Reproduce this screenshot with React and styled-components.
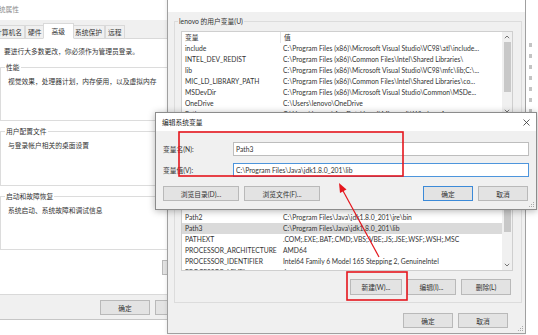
import React from 'react';
import styled, { createGlobalStyle } from 'styled-components';

const GlobalStyle = createGlobalStyle`
  html, body {
    margin: 0;
    padding: 0;
    background: #fff;
    overflow: hidden;
  }
  body {
    font-family: Lato, "Noto Sans CJK SC", sans-serif;
    font-size: 6.75px;
    color: #333;
  }
`;

const Desktop = styled.div`
  position: relative;
  width: 538px;
  height: 335px;
  overflow: hidden;
  background: #fff;
`;

/* ---------- shared bits ---------- */

const WinButton = styled.button`
  width: ${p => p.$w || 50}px;
  height: ${p => p.$h || 15}px;
  flex: none;
  box-sizing: border-box;
  margin: 0;
  padding: 0;
  border: 1px solid ${p => (p.$primary ? '#3c8ad8' : '#b9b9b9')};
  background: #e3e3e3;
  font-family: inherit;
  font-size: 6.75px;
  color: #333;
  white-space: nowrap;
  display: flex;
  align-items: center;
  justify-content: center;
`;

const ButtonRow = styled.div`
  display: flex;
  justify-content: ${p => p.$justify || 'flex-end'};
  gap: ${p => p.$gap ?? 5}px;
  margin-top: ${p => p.$mt || 0}px;
  padding-right: ${p => p.$pr || 0}px;
`;

const Group = styled.fieldset`
  margin: ${p => p.$mt || 0}px 0 0;
  padding: ${p => p.$pad};
  border: 1px solid #dcdcdc;
  min-width: 0;
`;

const Legend = styled.legend`
  padding: 0 1px;
  margin-left: -3px;
  line-height: 10px;
  font-size: 6.75px;
  color: #333;
`;

const Grip = () => (
  <GripBox width="8" height="8" viewBox="0 0 8 8">
    {[[6, 2], [6, 4], [4, 4], [6, 6], [4, 6], [2, 6]].map(([x, y]) => (
      <rect key={`${x}-${y}`} x={x} y={y} width="1" height="1" fill="#aaa" />
    ))}
  </GripBox>
);

const GripBox = styled.svg`
  position: absolute;
  right: 1px;
  bottom: 1px;
`;

/* ---------- system properties (left, behind) ---------- */

const SysWindow = styled.div`
  position: absolute;
  left: -12px;
  top: -2px;
  width: 280px;
  height: 322px;
  box-sizing: border-box;
  display: flex;
  flex-direction: column;
  background: #f0f0f0;
  border-bottom: 1px solid #c6c6c6;
`;

const SysTitle = styled.div`
  height: 22px;
  flex: none;
  background: #fff;
  display: flex;
  align-items: center;
  padding-left: 4px;
  color: #8a8a8a;
`;

const TabStrip = styled.div`
  height: 18px;
  flex: none;
  display: flex;
  align-items: flex-end;
  padding-left: 4px;
  box-sizing: border-box;
`;

const Tab = styled.div`
  height: ${p => (p.$active ? 16 : 14)}px;
  padding: 0 ${p => (p.$active ? 8 : 2)}px;
  margin: 0 ${p => (p.$active ? -2 : 0)}px -1px;
  box-sizing: border-box;
  display: flex;
  align-items: center;
  white-space: nowrap;
  background: ${p => (p.$active ? '#fff' : '#f0f0f0')};
  border: 1px solid #d9d9d9;
  border-bottom-color: ${p => (p.$active ? '#fff' : '#d9d9d9')};
  position: relative;
  z-index: ${p => (p.$active ? 1 : 0)};
`;

const TabPage = styled.div`
  height: 257px;
  flex: none;
  margin: 0 6px;
  box-sizing: border-box;
  border: 1px solid #d9d9d9;
  background: #fff;
  padding: 7px 7px 0 5px;
  display: flex;
  flex-direction: column;
`;

const Notice = styled.div`
  line-height: 10px;
  margin-left: 4px;
  white-space: nowrap;
`;

const GroupText = styled.div`
  line-height: 10px;
  white-space: nowrap;
`;

const SysFooter = styled.div`
  display: flex;
  justify-content: flex-end;
  gap: 5px;
  padding: 5px 8px 0 0;
`;

/* ---------- environment variables dialog ---------- */

const EnvWindow = styled.div`
  position: absolute;
  left: 167px;
  top: -18px;
  width: 359px;
  height: 352px;
  box-sizing: border-box;
  border: 1px solid #a0a0a0;
  background: #f0f0f0;
  display: flex;
  flex-direction: column;
  box-shadow: 0 0 4px rgba(0, 0, 0, 0.12);
`;

const EnvTitle = styled.div`
  height: 29px;
  flex: none;
  background: #fff;
`;

const EnvBody = styled.div`
  padding: 0 3px 0 6px;
  display: flex;
  flex-direction: column;
`;

const ListBox = styled.div`
  height: ${p => p.$h}px;
  box-sizing: border-box;
  border: 1px solid #cfcfcf;
  background: #fff;
  display: flex;
  overflow: hidden;
`;

const ListMain = styled.div`
  flex: 1;
  min-width: 0;
  overflow: hidden;
`;

const ListHeader = styled.div`
  height: 11px;
  display: flex;
  line-height: 11px;
`;

const HeadCell = styled.div`
  width: ${p => (p.$w ? `${p.$w}px` : 'auto')};
  flex: ${p => (p.$w ? 'none' : 1)};
  box-sizing: border-box;
  padding-left: ${p => p.$pl}px;
  border-right: ${p => (p.$w ? '1px solid #e5e5e5' : 'none')};
`;

const Row = styled.div`
  height: 11px;
  line-height: 11px;
  display: flex;
  white-space: nowrap;
  background: ${p => (p.$selected ? '#dadada' : 'transparent')};
`;

const NameCell = styled.div`
  width: 99px;
  flex: none;
  box-sizing: border-box;
  padding-left: 3px;
  overflow: hidden;
`;

const ValueCell = styled.div`
  flex: 1;
  padding-left: 2px;
  overflow: hidden;
`;

const ScrollBar = styled.div`
  width: 10px;
  flex: none;
  background: #f0f0f0;
  display: flex;
  flex-direction: column;
`;

const ScrollArrow = styled.div`
  height: 10px;
  flex: none;
  display: flex;
  align-items: center;
  justify-content: center;
`;

const Track = styled.div`
  flex: 1;
  display: flex;
  flex-direction: column;
`;

const Thumb = styled.div`
  margin: ${p => p.$offset}px 1.5px 0;
  height: ${p => p.$h}px;
  background: #c8c8c8;
`;

const Chevron = ({ up }) => (
  <svg width="6" height="4" viewBox="0 0 6 4">
    <path d={up ? 'M0.8 3.2 L3 1 L5.2 3.2' : 'M0.8 0.8 L3 3 L5.2 0.8'} fill="none" stroke="#666" strokeWidth="0.9" />
  </svg>
);

const VarList = ({ height, rows, selected, thumbTop, thumbH }) => (
  <ListBox $h={height}>
    <ListMain>
      <ListHeader>
        <HeadCell $w={99} $pl={3}>变量</HeadCell>
        <HeadCell $pl={3}>值</HeadCell>
      </ListHeader>
      {rows.map(([name, value]) => (
        <Row key={name} $selected={name === selected}>
          <NameCell>{name}</NameCell>
          <ValueCell>{value}</ValueCell>
        </Row>
      ))}
    </ListMain>
    <ScrollBar>
      <ScrollArrow><Chevron up /></ScrollArrow>
      <Track><Thumb $offset={thumbTop} $h={thumbH} /></Track>
      <ScrollArrow><Chevron /></ScrollArrow>
    </ScrollBar>
  </ListBox>
);

/* ---------- edit dialog (front) ---------- */

const EditDialog = styled.div`
  position: absolute;
  left: 155px;
  top: 112px;
  width: 382px;
  height: 98px;
  box-sizing: border-box;
  border: 1px solid #8c8c8c;
  background: #f0f0f0;
  display: flex;
  flex-direction: column;
  box-shadow: 0 1px 7px rgba(0, 0, 0, 0.3);
  z-index: 2;
`;

const EditTitle = styled.div`
  height: 18px;
  flex: none;
  background: #fff;
  display: flex;
  align-items: center;
  justify-content: space-between;
  padding: 0 6px 0 6px;
  color: #222;
`;

const EditBody = styled.div`
  padding: 11px 7px 0 7px;
  display: flex;
  flex-direction: column;
`;

const FieldRow = styled.div`
  display: flex;
  align-items: center;
  height: 14px;
  margin-top: ${p => p.$mt || 0}px;
`;

const FieldLabel = styled.div`
  width: 70px;
  flex: none;
  white-space: nowrap;
`;

const TextInput = styled.input`
  flex: 1;
  min-width: 0;
  height: 14px;
  box-sizing: border-box;
  margin: 0;
  padding: 0 2px;
  border: 1px solid ${p => (p.$focused ? '#4d95dc' : '#bdbdbd')};
  background: #fff;
  font-family: Lato, "Noto Sans CJK SC", sans-serif;
  font-size: 6.75px;
  color: #333;
  outline: none;
`;

/* ---------- window peeking at the right ---------- */

const BackStrip = styled.div`
  position: absolute;
  left: 526px;
  top: 0;
  width: 12px;
  height: 335px;
  background: #fff;
  display: flex;
  flex-direction: column;
  gap: 7px;
  padding: 43px 0 0 3px;
  box-sizing: border-box;
`;

const Mark = styled.div`
  width: 3px;
  height: 4px;
  background: #c4c4c4;
`;

/* ---------- annotation overlay ---------- */

const Overlay = styled.svg`
  position: absolute;
  left: 0;
  top: 0;
  z-index: 5;
  pointer-events: none;
`;

const userRows = [
  ['include', 'C:\\Program Files (x86)\\Microsoft Visual Studio\\VC98\\atl\\include...'],
  ['INTEL_DEV_REDIST', 'C:\\Program Files (x86)\\Common Files\\Intel\\Shared Libraries\\'],
  ['lib', 'C:\\Program Files (x86)\\Microsoft Visual Studio\\VC98\\mfc\\lib;C:\\...'],
  ['MIC_LD_LIBRARY_PATH', 'C:\\Program Files (x86)\\Common Files\\Intel\\Shared Libraries\\co...'],
  ['MSDevDir', 'C:\\Program Files (x86)\\Microsoft Visual Studio\\Common\\MSDe...'],
  ['OneDrive', 'C:\\Users\\lenovo\\OneDrive'],
  ['Path', 'C:\\Users\\lenovo\\AppData\\Local\\Microsoft\\WindowsApps;'],
];

const systemRows = [
  ['NUMBER_OF_PROCESSORS', '12'],
  ['OS', 'Windows_NT'],
  ['Path', 'C:\\Program Files\\Java\\jdk1.8.0_201\\bin;C:\\Windows\\system32;...'],
  ['Path2', 'C:\\Program Files\\Java\\jdk1.8.0_201\\jre\\bin'],
  ['Path3', 'C:\\Program Files\\Java\\jdk1.8.0_201\\lib'],
  ['PATHEXT', '.COM;.EXE;.BAT;.CMD;.VBS;.VBE;.JS;.JSE;.WSF;.WSH;.MSC'],
  ['PROCESSOR_ARCHITECTURE', 'AMD64'],
  ['PROCESSOR_IDENTIFIER', 'Intel64 Family 6 Model 165 Stepping 2, GenuineIntel'],
  ['PROCESSOR_LEVEL', '6'],
];

const tabs = ['计算机名', '硬件', '高级', '系统保护', '远程'];

export default function App() {
  return (
    <Desktop>
      <GlobalStyle />

      <SysWindow>
        <SysTitle>系统属性</SysTitle>
        <TabStrip>
          {tabs.map(t => (
            <Tab key={t} $active={t === '高级'}>{t}</Tab>
          ))}
        </TabStrip>
        <TabPage>
          <Notice>要进行大多数更改，你必须作为管理员登录。</Notice>
          <Group $mt={6} $pad="4px 7px 34px 7px">
            <Legend>性能</Legend>
            <GroupText>视觉效果，处理器计划，内存使用，以及虚拟内存</GroupText>
          </Group>
          <Group $mt={5} $pad="4px 7px 35px 7px">
            <Legend>用户配置文件</Legend>
            <GroupText>与登录帐户相关的桌面设置</GroupText>
          </Group>
          <Group $mt={5} $pad="4px 7px 34px 7px">
            <Legend>启动和故障恢复</Legend>
            <GroupText>系统启动、系统故障和调试信息</GroupText>
          </Group>
          <ButtonRow $mt={10}>
            <WinButton $w={92}>环境变量(N)...</WinButton>
          </ButtonRow>
        </TabPage>
        <SysFooter>
          <WinButton>确定</WinButton>
          <WinButton>取消</WinButton>
          <WinButton>应用(A)</WinButton>
        </SysFooter>
      </SysWindow>

      <EnvWindow>
        <EnvTitle />
        <EnvBody>
          <Group $mt={4} $pad="5px 8px 6px 6px">
            <Legend>lenovo 的用户变量(U)</Legend>
            <VarList height={86} rows={userRows} thumbTop={0} thumbH={50} />
            <ButtonRow $mt={6} $pr={2}>
              <WinButton $w={52}>新建(N)...</WinButton>
              <WinButton $w={49}>编辑(E)...</WinButton>
              <WinButton>删除(D)</WinButton>
            </ButtonRow>
          </Group>
          <Group $mt={7} $pad="5px 8px 7px 6px">
            <Legend>系统变量(S)</Legend>
            <VarList height={104} rows={systemRows} selected="Path3" thumbTop={22} thumbH={32} />
            <ButtonRow $mt={8} $pr={2}>
              <WinButton $w={52} $h={16}>新建(W)...</WinButton>
              <WinButton $w={49} $h={16}>编辑(I)...</WinButton>
              <WinButton $h={16}>删除(L)</WinButton>
            </ButtonRow>
          </Group>
          <ButtonRow $mt={10} $pr={14}>
            <WinButton>确定</WinButton>
            <WinButton>取消</WinButton>
          </ButtonRow>
        </EnvBody>
        <Grip />
      </EnvWindow>

      <BackStrip>
        {Array.from({ length: 7 }, (_, i) => <Mark key={i} />)}
      </BackStrip>

      <EditDialog>
        <EditTitle>
          <span>编辑系统变量</span>
          <svg width="7" height="7" viewBox="0 0 7 7">
            <path d="M0.5 0.5 L6.5 6.5 M6.5 0.5 L0.5 6.5" stroke="#333" strokeWidth="0.8" />
          </svg>
        </EditTitle>
        <EditBody>
          <FieldRow>
            <FieldLabel>变量名(N):</FieldLabel>
            <TextInput readOnly value="Path3" />
          </FieldRow>
          <FieldRow $mt={7}>
            <FieldLabel>变量值(V):</FieldLabel>
            <TextInput readOnly $focused value="C:\Program Files\Java\jdk1.8.0_201\lib" />
          </FieldRow>
          <ButtonRow $mt={9} $justify="space-between">
            <ButtonRow>
              <WinButton $w={76}>浏览目录(D)...</WinButton>
              <WinButton $w={76}>浏览文件(F)...</WinButton>
            </ButtonRow>
            <ButtonRow $pr={1}>
              <WinButton $primary>确定</WinButton>
              <WinButton>取消</WinButton>
            </ButtonRow>
          </ButtonRow>
        </EditBody>
        <Grip />
      </EditDialog>

      <Overlay width="538" height="335" viewBox="0 0 538 335">
        <rect x="179" y="132" width="224" height="44" fill="none" stroke="#e5161d" strokeWidth="1.6" />
        <rect x="347" y="272" width="60" height="28" fill="none" stroke="#e5161d" strokeWidth="1.6" />
        <line x1="379" y1="257" x2="342" y2="189" stroke="#e5161d" strokeWidth="1.2" />
        <polygon points="339,183 346.5,189.5 340,193" fill="#e5161d" />
      </Overlay>
    </Desktop>
  );
}
